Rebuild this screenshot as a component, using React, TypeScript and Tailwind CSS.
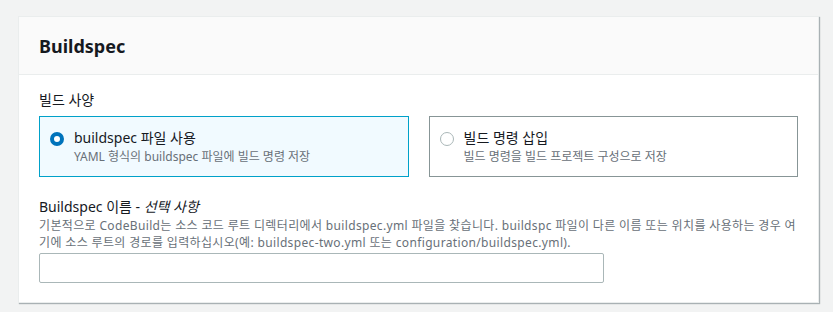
import React from "react";

export default function App() {
  const font = { fontFamily: '"Noto Sans", "Noto Sans CJK KR", sans-serif' };
  return (
    <div className="w-[833px] h-[312px] bg-[#f2f3f3] pt-[16px] pl-[18px] overflow-hidden" style={font}>
      <div className="w-[801px] bg-white border border-[#eaeded] shadow-[1px_1px_1px_0_rgba(0,28,36,0.3)]">
        <div className="h-[58px] bg-[#fafafa] border-b border-[#eaeded] px-[20px] flex items-center">
          <h2 className="text-[18px] font-bold text-[#16191f] leading-none">Buildspec</h2>
        </div>
        <div className="px-[20px] pt-[15px] pb-[19px]">
          <div className="text-[14px] text-[#16191f] leading-[20px] mb-[6px]">빌드 사양</div>
          <div className="flex gap-[20px]">
            <div className="w-[370px] h-[61px] border border-[#00a1c9] bg-[#f1faff] flex items-start pl-[10px] pt-[11px] gap-[10px]">
              <span className="mt-[4px] w-[14px] h-[14px] rounded-full border-[4px] border-[#0073bb] bg-white shrink-0" />
              <div>
                <div className="text-[14px] text-[#16191f] leading-[20px]">buildspec 파일 사용</div>
                <div className="text-[12px] text-[#687078] leading-[18px]">YAML 형식의 buildspec 파일에 빌드 명령 저장</div>
              </div>
            </div>
            <div className="w-[370px] h-[61px] border border-[#879596] bg-white flex items-start pl-[10px] pt-[11px] gap-[10px]">
              <span className="mt-[4px] w-[14px] h-[14px] rounded-full border border-[#aab7b8] bg-white shrink-0" />
              <div>
                <div className="text-[14px] text-[#16191f] leading-[20px]">빌드 명령 삽입</div>
                <div className="text-[12px] text-[#687078] leading-[18px]">빌드 명령을 빌드 프로젝트 구성으로 저장</div>
              </div>
            </div>
          </div>
          <div className="mt-[21px] text-[14px] text-[#16191f] leading-[18px]">
            Buildspec 이름 - <i>선택 사항</i>
          </div>
          <div className="mt-[1px] text-[12px] text-[#687078] leading-[17px] tracking-[0.35px] whitespace-nowrap">
            기본적으로 CodeBuild는 소스 코드 루트 디렉터리에서 buildspec.yml 파일을 찾습니다. buildspc 파일이 다른 이름 또는 위치를 사용하는 경우 여<br />기에 소스 루트의 경로를 입력하십시오(예: buildspec-two.yml 또는 configuration/buildspec.yml).
          </div>
          <input className="mt-[2px] block w-[565px] h-[30px] border border-[#aab7b8] rounded-[2px] bg-white" />
        </div>
      </div>
    </div>
  );
}
